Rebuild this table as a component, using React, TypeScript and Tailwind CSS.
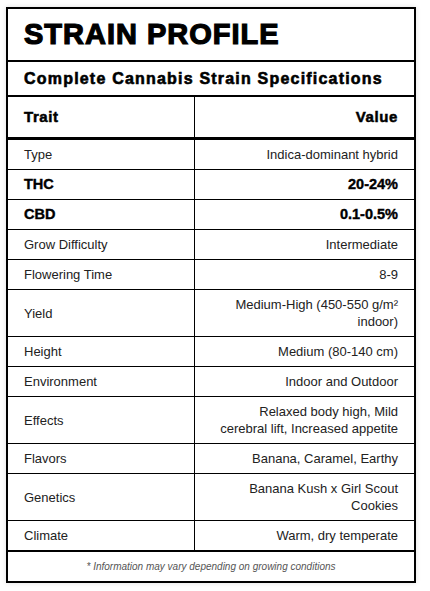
import React from 'react';

const rows: { trait: string; value: string; strong?: boolean }[] = [
  { trait: 'Type', value: 'Indica-dominant hybrid' },
  { trait: 'THC', value: '20-24%', strong: true },
  { trait: 'CBD', value: '0.1-0.5%', strong: true },
  { trait: 'Grow Difficulty', value: 'Intermediate' },
  { trait: 'Flowering Time', value: '8-9' },
  { trait: 'Yield', value: 'Medium-High (450-550 g/m² indoor)' },
  { trait: 'Height', value: 'Medium (80-140 cm)' },
  { trait: 'Environment', value: 'Indoor and Outdoor' },
  { trait: 'Effects', value: 'Relaxed body high, Mild cerebral lift, Increased appetite' },
  { trait: 'Flavors', value: 'Banana, Caramel, Earthy' },
  { trait: 'Genetics', value: 'Banana Kush x Girl Scout Cookies' },
  { trait: 'Climate', value: 'Warm, dry temperate' },
];

export default function App() {
  return (
    <div className="w-[430px] h-[591px] bg-white pt-[7px] pl-[6px] font-['Liberation_Sans',Arial,sans-serif]">
      <div className="w-[410px] border-2 border-black bg-white shadow-[0_0_5px_rgba(0,0,0,0.12)]">
        {/* Title */}
        <div className="h-[53px] flex items-center px-4 border-b-2 border-black">
          <h1 className="text-[29px] leading-none font-bold tracking-[1px] text-black [-webkit-text-stroke:1.2px_#000]">
            STRAIN PROFILE
          </h1>
        </div>

        {/* Subtitle */}
        <div className="h-[35px] flex items-center px-4 border-b-2 border-black">
          <h2 className="text-[16px] leading-none font-bold tracking-[1.2px] text-black [-webkit-text-stroke:0.6px_#000]">
            Complete Cannabis Strain Specifications
          </h2>
        </div>

        {/* Table header */}
        <div className="flex h-[43px] border-b-[3px] border-black">
          <div className="w-[187px] shrink-0 border-r border-black flex items-center px-4">
            <span className="text-[15px] font-bold tracking-[0.6px] text-black [-webkit-text-stroke:0.5px_#000]">Trait</span>
          </div>
          <div className="flex-1 flex items-center justify-end px-4">
            <span className="text-[15px] font-bold tracking-[0.6px] text-black [-webkit-text-stroke:0.5px_#000]">Value</span>
          </div>
        </div>

        {/* Rows */}
        {rows.map((r) => (
          <div key={r.trait} className="flex border-b border-black">
            <div className="w-[187px] shrink-0 border-r border-black flex items-center px-4 py-[6px]">
              <span
                className={
                  r.strong
                    ? 'text-[14.5px] leading-[17px] font-bold text-black [-webkit-text-stroke:0.4px_#000]'
                    : 'text-[13px] leading-[17px] text-[#222]'
                }
              >
                {r.trait}
              </span>
            </div>
            <div className="flex-1 flex items-center justify-end px-4 py-[6px] text-right">
              <span
                className={
                  r.strong
                    ? 'text-[14.5px] leading-[17px] font-bold text-black [-webkit-text-stroke:0.4px_#000]'
                    : 'text-[13px] leading-[17px] text-[#222]'
                }
              >
                {r.value}
              </span>
            </div>
          </div>
        ))}

        {/* Footer */}
        <div className="h-[30px] border-t border-black flex items-center justify-center">
          <p className="text-[10px] italic text-[#555]">* Information may vary depending on growing conditions</p>
        </div>
      </div>
    </div>
  );
}
